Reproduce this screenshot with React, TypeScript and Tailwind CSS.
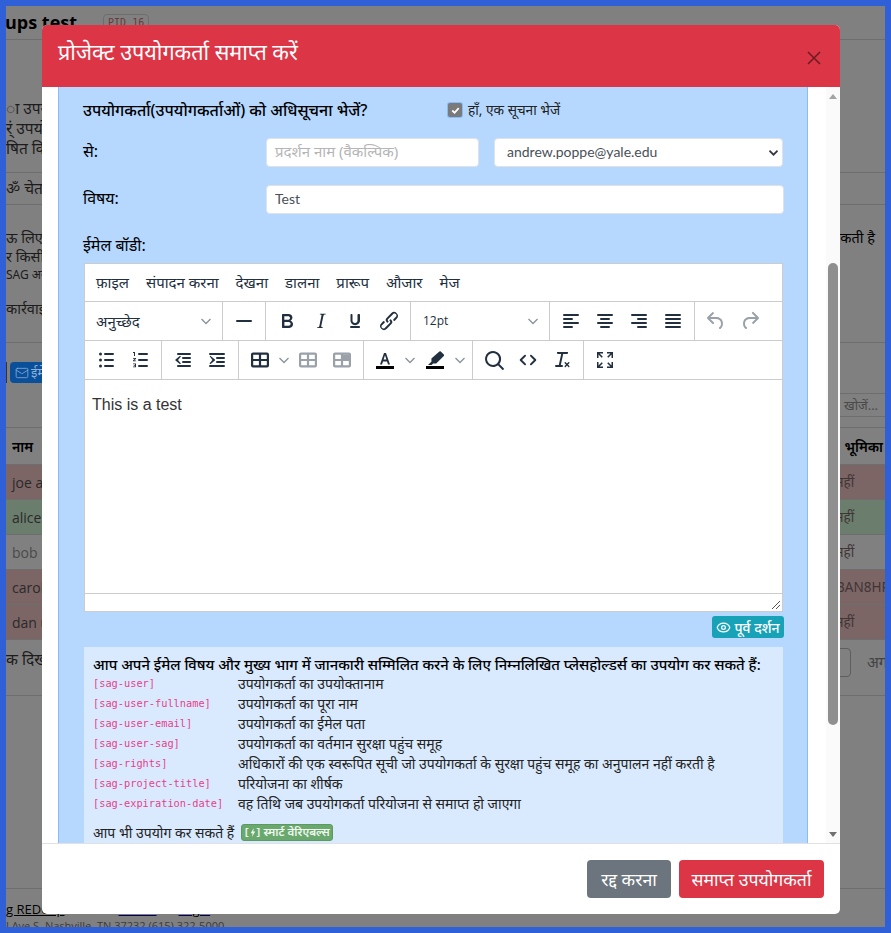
import React from 'react';
import { Eye, Mail } from 'lucide-react';

const HINDI = '"Noto Sans", "Liberation Sans", sans-serif';
const TABLE_FRAME = 'M19 4.5a2 2 0 0 1 2 2v11a2 2 0 0 1-2 2H5a2 2 0 0 1-2-2v-11c0-1.1.9-2 2-2h14zM5.2 13v4.3h5.7V13H5.2zm13.6 0h-5.700v4.300h5.700V13zm0-6.300h-5.700V11h5.700V6.700zM5.200 11h5.700V6.700H5.200V11z';

const ICONS: Record<string, React.ReactNode> = {
  hr: <rect x="4" y="11" width="16" height="2" rx="1" />,
  bold: <path d="M7.8 19c-.3 0-.5 0-.6-.2l-.2-.5V5.7c0-.2 0-.4.2-.5l.6-.2h5c1.5 0 2.7.3 3.5 1 .7.6 1.1 1.4 1.1 2.5a3 3 0 0 1-.6 1.9c-.4.6-1 1-1.6 1.2.4.1.9.3 1.3.6s.8.7 1 1.2c.4.4.5 1 .5 1.6 0 1.3-.4 2.3-1.3 3-.8.7-2.1 1-3.8 1H7.8zm5-8.3c.6 0 1.2-.1 1.6-.5.4-.3.6-.7.6-1.3 0-1.1-.8-1.7-2.3-1.700H9.3v3.5h3.4zm.5 6c.7 0 1.3-.1 1.7-.4.4-.4.6-.9.6-1.5s-.2-1-.7-1.4c-.4-.3-1-.4-2-.4H9.4v3.8h4z" />,
  italic: <path d="M16.7 4.7l-.1.9h-.3c-.6 0-1 0-1.4.3-.3.3-.4.6-.5 1.1l-2.1 9.8v.6c0 .5.4.8 1.4.8h.2l-.2.8H8l.2-.8h.2c1.1 0 1.8-.5 2-1.5l2-9.8.1-.5c0-.6-.4-.8-1.4-.8h-.3l.2-.9h5.8z" />,
  underline: <path d="M16 5c.6 0 1 .4 1 1v5.5a4 4 0 0 1-.4 1.8l-1 1.4a5.3 5.3 0 0 1-5.5 1 4 4 0 0 1-2.2-2.4c-.2-.6-.4-1.2-.4-1.8V6c0-.6.4-1 1-1s1 .4 1 1v5.5c0 .3 0 .6.2 1a3 3 0 0 0 .5.8 2.5 2.5 0 0 0 2.8.5c.3-.1.6-.3.8-.5l.5-.8.2-1V6c0-.6.4-1 1-1zM8 17h8c.6 0 1 .4 1 1s-.4 1-1 1H8a1 1 0 0 1 0-2z" />,
  link: <path d="M6.2 12.3a1 1 0 0 1 1.4 1.4l-2 2a2 2 0 1 0 2.6 2.8l4.8-4.8a1 1 0 0 0 0-1.4 1 1 0 1 1 1.4-1.3 2.9 2.9 0 0 1 0 4L9.6 20a3.9 3.9 0 0 1-5.5-5.5l2-2.2zm11.6-.6a1 1 0 0 1-1.4-1.4l2-2a2 2 0 1 0-2.6-2.8L11 10.3a1 1 0 0 0 0 1.4A1 1 0 1 1 9.6 13a2.9 2.9 0 0 1 0-4L14.4 4a3.9 3.9 0 0 1 5.5 5.5l-2 2.2z" />,
  alignLeft: <path d="M5 5h14a1 1 0 0 1 0 2H5a1 1 0 1 1 0-2zm0 4h8a1 1 0 0 1 0 2H5a1 1 0 1 1 0-2zm0 8h8a1 1 0 0 1 0 2H5a1 1 0 0 1 0-2zm0-4h14a1 1 0 0 1 0 2H5a1 1 0 0 1 0-2z" />,
  alignCenter: <path d="M5 5h14a1 1 0 0 1 0 2H5a1 1 0 1 1 0-2zm3 4h8a1 1 0 0 1 0 2H8a1 1 0 1 1 0-2zm0 8h8a1 1 0 0 1 0 2H8a1 1 0 0 1 0-2zm-3-4h14a1 1 0 0 1 0 2H5a1 1 0 0 1 0-2z" />,
  alignRight: <path d="M5 5h14a1 1 0 0 1 0 2H5a1 1 0 1 1 0-2zm6 4h8a1 1 0 0 1 0 2h-8a1 1 0 0 1 0-2zm0 8h8a1 1 0 0 1 0 2h-8a1 1 0 0 1 0-2zm-6-4h14a1 1 0 0 1 0 2H5a1 1 0 0 1 0-2z" />,
  alignJustify: <path d="M5 5h14a1 1 0 0 1 0 2H5a1 1 0 1 1 0-2zm0 4h14a1 1 0 0 1 0 2H5a1 1 0 1 1 0-2zm0 4h14a1 1 0 0 1 0 2H5a1 1 0 0 1 0-2zm0 4h14a1 1 0 0 1 0 2H5a1 1 0 0 1 0-2z" />,
  undo: <path d="M6.4 8H12c3.7 0 6.2 2 6.8 5.1.6 2.7-.4 5.6-2.3 6.8a1 1 0 0 1-1-1.8c1.1-.6 1.8-2.7 1.4-4.6-.5-2.1-2.1-3.5-4.9-3.5H6.4l3.3 3.3a1 1 0 1 1-1.4 1.4l-5-5a1 1 0 0 1 0-1.4l5-5a1 1 0 0 1 1.4 1.4L6.4 8z" />,
  redo: <path d="M17.6 10H12c-2.8 0-4.4 1.4-4.9 3.5-.4 2 .3 4 1.4 4.6a1 1 0 1 1-1 1.8c-2-1.2-2.9-4.1-2.3-6.8C5.800 10 8.300 8 12 8h5.600l-3.300-3.300a1 1 0 1 1 1.400-1.400l5 5a1 1 0 0 1 0 1.400l-5 5a1 1 0 0 1-1.400-1.400l3.300-3.300z" />,
  bullist: <path d="M11 5h8a1 1 0 0 1 0 2h-8a1 1 0 0 1 0-2zm0 6h8a1 1 0 0 1 0 2h-8a1 1 0 0 1 0-2zm0 6h8a1 1 0 0 1 0 2h-8a1 1 0 0 1 0-2zM6.500 4.500a1.500 1.500 0 1 1 0 3 1.500 1.500 0 0 1 0-3zm0 6a1.500 1.500 0 1 1 0 3 1.500 1.500 0 0 1 0-3zm0 6a1.500 1.500 0 1 1 0 3 1.500 1.500 0 0 1 0-3z" />,
  numlist: <path d="M11 5h8a1 1 0 0 1 0 2h-8a1 1 0 0 1 0-2zm0 6h8a1 1 0 0 1 0 2h-8a1 1 0 0 1 0-2zm0 6h8a1 1 0 0 1 0 2h-8a1 1 0 0 1 0-2zM6 4h1v4H6V5H5V4h1zM5 10h3v.8L6.200 12.500H8v.8H5v-.8l1.800-1.700H5V10zm0 5.500h3v3.800H5v-.8h2v-.7H5.800v-.8H7v-.7H5v-.8z" />,
  outdent: <path d="M7 5h12a1 1 0 0 1 0 2H7a1 1 0 1 1 0-2zm5 4h7a1 1 0 0 1 0 2h-7a1 1 0 0 1 0-2zm0 4h7a1 1 0 0 1 0 2h-7a1 1 0 0 1 0-2zm-5 4h12a1 1 0 0 1 0 2H7a1 1 0 0 1 0-2zm2.700-8.300L7 12l2.700 3.300a.6.6 0 0 1-.9.7L4.500 12.400a.6.6 0 0 1 0-.8L8.800 8a.6.6 0 0 1 .9.7z" />,
  indent: <path d="M5 5h14a1 1 0 0 1 0 2H5a1 1 0 1 1 0-2zm7 4h7a1 1 0 0 1 0 2h-7a1 1 0 0 1 0-2zm0 4h7a1 1 0 0 1 0 2h-7a1 1 0 0 1 0-2zm-7 4h14a1 1 0 0 1 0 2H5a1 1 0 0 1 0-2zm-.3-8.700a.6.6 0 0 1 .9-.3l4.300 3.600a.6.6 0 0 1 0 .8L5.600 16a.6.6 0 0 1-.9-.7L7.400 12 4.700 8.300z" />,
  table: <path fillRule="evenodd" d={TABLE_FRAME} />,
  tableCell: <path fillRule="evenodd" d={TABLE_FRAME} />,
  tableRow: (
    <>
      <path fillRule="evenodd" d={TABLE_FRAME} />
      <rect x="13" y="6.500" width="6" height="4.700" />
    </>
  ),
  search: <path d="M16 17.300a8 8 0 1 1 1.400-1.400l4.300 4.400a1 1 0 0 1-1.400 1.400l-4.400-4.400zM11 17a6 6 0 1 0 0-12 6 6 0 0 0 0 12z" />,
  code: <path d="M9.800 15.700a1 1 0 0 1-1.400 1.400l-4.400-4.400a1 1 0 0 1 0-1.400l4.400-4.400a1 1 0 0 1 1.400 1.400L6.100 12l3.700 3.700zm4.400 0L17.900 12l-3.700-3.700a1 1 0 0 1 1.400-1.400l4.400 4.400a1 1 0 0 1 0 1.400l-4.400 4.400a1 1 0 0 1-1.400-1.400z" />,
  clear: <path d="M13.200 6l-2.400 11H12a1 1 0 0 1 0 2H6a1 1 0 0 1 0-2h2.800l2.400-11H8a1 1 0 0 1-1-.9V4h11v1.100a1 1 0 0 1-1 .9h-3.800zM17 15.600l1.300-1.300a.7.7 0 0 1 1 1L18 16.600l1.300 1.300a.7.7 0 0 1-1 1L17 17.600l-1.300 1.300a.7.7 0 0 1-1-1l1.300-1.300-1.300-1.300a.7.7 0 0 1 1-1l1.300 1.300z" />,
  fullscreen: <path d="M4 4h6v1.500H6.600l3.200 3.200-1.100 1.100-3.200-3.200V10H4V4zm16 0v6h-1.500V6.600l-3.200 3.200-1.100-1.100 3.200-3.200H14V4h6zM4 20v-6h1.500v3.400l3.200-3.200 1.100 1.100-3.200 3.200H10V20H4zm16 0h-6v-1.500h3.400l-3.200-3.200 1.100-1.100 3.200 3.200V14H20v6z" />,
  textColor: (
    <>
      <path d="M7 16.500L11 5h2l4 11.500h-2l-1-3.100h-4l-1 3.100H7zm3.600-4.900h2.800L12 7.300l-1.400 4.300z" />
      <rect x="3" y="18" width="18" height="3" fill="#000" />
    </>
  ),
  highlight: (
    <>
      <path d="M17.800 3.500l3 3a1 1 0 0 1 0 1.400l-7.600 7.600-3-.1-1.600 1.600H5l3.500-3.500-.1-2.900 8-7.100a1 1 0 0 1 1.400 0z" />
      <rect x="3" y="18" width="18" height="3" fill="#000" />
    </>
  ),
};

function Icon({ name, muted }: { name: string; muted?: boolean }) {
  return (
    <span className="w-[34px] h-[38px] flex items-center justify-center shrink-0">
      <svg viewBox="0 0 24 24" width="24" height="24" fill={muted ? '#9aa1a9' : '#222f3e'}>
        {ICONS[name]}
      </svg>
    </span>
  );
}

function Chevron({ color = '#8a929a', size = 10, weight = 1.3 }: { color?: string; size?: number; weight?: number }) {
  return (
    <svg viewBox="0 0 10 10" width={size} height={size} fill="none" stroke={color} strokeWidth={weight}>
      <path d="M.5 3l4.500 4.500L9.500 3" />
    </svg>
  );
}

function Group({ children, last }: { children: React.ReactNode; last?: boolean }) {
  return (
    <div className={`flex items-center h-[38px] px-[4px] ${last ? '' : 'border-r border-[#cccccc]'}`}>{children}</div>
  );
}

const MENU = ['फ़ाइल', 'संपादन करना', 'देखना', 'डालना', 'प्रारूप', 'औजार', 'मेज'];

const PLACEHOLDERS = [
  ['[sag-user]', 'उपयोगकर्ता का उपयोक्तानाम'],
  ['[sag-user-fullname]', 'उपयोगकर्ता का पूरा नाम'],
  ['[sag-user-email]', 'उपयोगकर्ता का ईमेल पता'],
  ['[sag-user-sag]', 'उपयोगकर्ता का वर्तमान सुरक्षा पहुंच समूह'],
  ['[sag-rights]', 'अधिकारों की एक स्वरूपित सूची जो उपयोगकर्ता के सुरक्षा पहुंच समूह का अनुपालन नहीं करती है'],
  ['[sag-project-title]', 'परियोजना का शीर्षक'],
  ['[sag-expiration-date]', 'वह तिथि जब उपयोगकर्ता परियोजना से समाप्त हो जाएगा'],
];

// colours below are the page as seen through the modal backdrop
const ROWS = [
  { name: 'joe admin', right: 'नहीं', bg: 'bg-[#7c6565]' },
  { name: 'alice user', right: 'नहीं', bg: 'bg-[#6b7d6d]' },
  { name: 'bob user', right: 'नहीं', bg: 'bg-[#808080]', dim: true },
  { name: 'carol user', right: 'BAN8HP', bg: 'bg-[#7c6565]' },
  { name: 'dan user', right: 'नहीं', bg: 'bg-[#7c6565]' },
];

function Background() {
  return (
    <div className="bg-[#808080] h-full overflow-hidden text-[15.5px] text-[#1c1c1c] whitespace-nowrap" style={{ fontFamily: HINDI }}>
      <div className="h-[34px] border-b border-[#6e6e6e] flex items-center">
        <span className="font-bold text-[18px] -ml-[1px] text-black" style={{ fontFamily: '"Open Sans", sans-serif' }}>ups test</span>
        <span className="ml-[26px] border border-[#6e6e6e] rounded px-1 text-[10px] text-[#6a3a3a]" style={{ fontFamily: '"DejaVu Sans Mono", monospace' }}>PID 16</span>
      </div>
      <div className="h-[133px] pt-[58px] border-b border-[#6e6e6e] leading-[20px]">
        <div>ा उपयोग</div>
        <div>र्ं उपयोग</div>
        <div>षित किया</div>
      </div>
      <div className="h-[32px] border-b border-[#6e6e6e] flex items-center">
        <span>ॐ चेतावनी</span>
      </div>
      <div className="h-[138px] pt-[23px] leading-[19px] text-[14.5px] flex justify-between border-b border-[#6e6e6e]">
        <div>
          <div>ऊ लिए उप</div>
          <div>र किसी</div>
          <div className="text-[12px] leading-[17px]">SAG अनु</div>
          <div className="mt-[16px]">कार्रवाई</div>
        </div>
        <div className="text-black pr-[10px]">सकती है</div>
      </div>
      <div className="h-[84px] flex justify-between items-start">
        <div className="mt-[19px] flex items-center gap-[3px]">
          <span className="w-[1px] h-[21px] bg-[#333333]" />
          <span className="h-[21px] w-[40px] bg-[#0a4f9a] rounded text-[#8fb3d9] text-[13px] pl-[5px] flex items-center gap-[2px] overflow-hidden">
            <Mail size={14} strokeWidth={1.3} className="shrink-0" />
            ईमेल
          </span>
        </div>
        <span className="mt-[50px] h-[24px] w-[46px] border-y border-l border-[#6e6e6e] text-[13px] text-[#4a4a4a] leading-[22px] pl-[4px] overflow-hidden">खोजें...</span>
      </div>
      <div className="flex justify-between items-center h-[38px] border-y border-[#6e6e6e] px-[2px] pl-[6px] font-semibold text-black text-[14px]">
        <span>नाम</span>
        <span>भूमिका</span>
      </div>
      {ROWS.map((row) => (
        <div key={row.name} className={`flex justify-between items-center h-[35px] border-b border-[#6e6e6e] pl-[6px] text-[14px] ${row.bg} ${row.dim ? 'text-[#4a4a4a]' : 'text-[#2a2a2a]'}`}>
          <span style={{ fontFamily: '"Open Sans", sans-serif' }}>{row.name}</span>
          <span className="w-[49px] overflow-hidden text-[13.5px] text-[#403535]">{row.right}</span>
        </div>
      ))}
      <div className="h-[56px] border-b border-[#6e6e6e] flex justify-between items-start pt-[8px]">
        <span>क दिखा</span>
        <div className="flex items-center gap-[16px] text-[#444444]">
          <span className="w-[32px] h-[29px] border border-[#5e5e5e] rounded" />
          <span className="w-[18px] overflow-hidden">अगला</span>
        </div>
      </div>
      <div className="h-[193px] border-b border-[#6e6e6e]" />
      <div className="pt-[11px] text-[13px] text-black" style={{ fontFamily: '"Open Sans", sans-serif' }}>
        <div className="leading-[18px]">
          <span className="underline">g REDCap</span>
          <span className="ml-[54px] underline decoration-[#000060]">Terms</span>
          <span className="ml-[22px] underline decoration-[#000060]">Legal</span>
        </div>
        <div className="leading-[15px] text-[11px] text-[#3a3a3a]">l Ave S. Nashville, TN 37232 (615) 322-5000</div>
      </div>
    </div>
  );
}

function Editor() {
  return (
    <div className="bg-white border border-[#cccccc] w-[699px] h-[349px] flex flex-col">
      <div className="h-[38px] flex items-center border-b border-[#cccccc] pl-[11px] gap-[17px] text-[15px] text-[#222f3e] shrink-0">
        {MENU.map((m) => (
          <span key={m}>{m}</span>
        ))}
      </div>
      <div className="h-[39px] flex border-b border-[#cccccc] shrink-0">
        <div className="w-[138px] h-[38px] border-r border-[#cccccc] flex items-center justify-between pl-[11px] pr-[11px] text-[15px] text-[#222f3e]">
          <span>अनुच्छेद</span>
          <Chevron />
        </div>
        <Group><Icon name="hr" /></Group>
        <Group>
          <Icon name="bold" />
          <Icon name="italic" />
          <Icon name="underline" />
          <Icon name="link" />
        </Group>
        <div className="w-[139px] h-[38px] border-r border-[#cccccc] flex items-center justify-between pl-[12px] pr-[11px] text-[12px] text-[#222f3e]" style={{ fontFamily: '"Open Sans", sans-serif' }}>
          <span>12pt</span>
          <Chevron />
        </div>
        <Group>
          <Icon name="alignLeft" />
          <Icon name="alignCenter" />
          <Icon name="alignRight" />
          <Icon name="alignJustify" />
        </Group>
        <Group last>
          <Icon name="undo" muted />
          <Icon name="redo" muted />
        </Group>
      </div>
      <div className="h-[39px] flex border-b border-[#cccccc] shrink-0">
        <Group>
          <Icon name="bullist" />
          <Icon name="numlist" />
        </Group>
        <Group>
          <Icon name="outdent" />
          <Icon name="indent" />
        </Group>
        <Group>
          <Icon name="table" />
          <span className="w-[14px] flex justify-center"><Chevron /></span>
          <Icon name="tableCell" muted />
          <Icon name="tableRow" muted />
        </Group>
        <Group>
          <Icon name="textColor" />
          <span className="w-[16px] flex justify-center"><Chevron /></span>
          <Icon name="highlight" />
          <span className="w-[16px] flex justify-center"><Chevron /></span>
        </Group>
        <Group>
          <Icon name="search" />
          <Icon name="code" />
          <Icon name="clear" />
        </Group>
        <Group last><Icon name="fullscreen" /></Group>
      </div>
      <div className="flex-1 px-[7px] pt-[16px] text-[16px] leading-[18px] text-[#333333]" style={{ fontFamily: '"Liberation Sans", sans-serif' }}>
        This is a test
      </div>
      <div className="h-[18px] border-t border-[#cccccc] flex justify-end items-end shrink-0">
        <svg viewBox="0 0 10 10" width="10" height="10" stroke="#555555" strokeWidth="1" className="mr-[1px] mb-[1px]">
          <path d="M1 9l8-8M5 9l4-4" />
        </svg>
      </div>
    </div>
  );
}

function Panel() {
  return (
    <div className="w-[750px] h-full overflow-hidden bg-[#b6d8fe] border-x border-[#86bdfb] pl-[24px] text-[16px] text-black">
      <div className="h-[26px] mt-[10px] flex items-center font-medium">
        <span className="w-[365px] whitespace-nowrap">उपयोगकर्ता(उपयोगकर्ताओं) को अधिसूचना भेजें?</span>
        <span className="w-[14px] h-[14px] bg-[#7a7a7a] rounded-[2px] ring-1 ring-[#86bdfb] flex items-center justify-center">
          <svg viewBox="0 0 12 12" width="11" height="11" fill="none" stroke="#fff" strokeWidth="2"><path d="M2.5 6l2.5 2.5 4.5-5" /></svg>
        </span>
        <span className="ml-[6px] text-[#222222] font-normal text-[13.7px]">हाँ, एक सूचना भेजें</span>
      </div>
      <div className="flex items-center mt-[15px] h-[29px]">
        <span className="w-[183px] -mt-[3px]">से:</span>
        <div className="w-[213px] h-[29px] bg-white rounded border border-[#dfe3e7] px-[8px] pb-[3px] flex items-center text-[#b5b5b5] text-[15px]">प्रदर्शन नाम (वैकल्पिक)</div>
        <div className="w-[289px] h-[29px] ml-[15px] bg-white rounded border border-[#dfe3e7] pl-[12px] pr-[4px] flex items-center justify-between text-[#495057] text-[14px]" style={{ fontFamily: 'Lato, sans-serif' }}>
          <span className="-mt-[3px]">andrew.poppe@yale.edu</span>
          <Chevron color="#343a40" size={9} weight={2} />
        </div>
      </div>
      <div className="flex items-center mt-[18px] h-[29px]">
        <span className="w-[183px] -mt-[4px]">विषय:</span>
        <div className="w-[518px] h-[29px] bg-white rounded border border-[#dfe3e7] px-[8px] pb-[3px] flex items-center text-[#495057] text-[14px]" style={{ fontFamily: 'Lato, sans-serif' }}>Test</div>
      </div>
      <div className="h-[24px] mt-[19px] flex items-center">ईमेल बॉडी:</div>
      <div className="mt-[6px] ml-[1px]"><Editor /></div>
      <div className="flex justify-end w-[701px] mt-[4px]">
        <span className="h-[22px] w-[72px] bg-[#17a2b8] rounded-[3px] text-white text-[14px] font-medium flex items-center justify-center gap-[3px] whitespace-nowrap">
          <Eye size={15} />
          पूर्व दर्शन
        </span>
      </div>
      <div className="w-[699px] ml-[1px] bg-[#d9eafe] mt-[9px] pt-[8px] pl-[9px] pb-[12px]">
        <div className="h-[19px] leading-[19px] font-medium text-[14.8px] whitespace-nowrap">आप अपने ईमेल विषय और मुख्य भाग में जानकारी सम्मिलित करने के लिए निम्नलिखित प्लेसहोल्डर्स का उपयोग कर सकते हैं:</div>
        {PLACEHOLDERS.map(([key, label]) => (
          <div key={key} className="h-[20px] flex items-center text-[14px] text-[#222222] whitespace-nowrap">
            <span className="w-[145px] text-[10.3px] text-[#e83e8c]" style={{ fontFamily: '"DejaVu Sans Mono", monospace' }}>{key}</span>
            <span className="-mt-[2px]">{label}</span>
          </div>
        ))}
        <div className="flex items-center mt-[9px] h-[18px] text-[14px] text-[#222222] whitespace-nowrap">
          आप भी उपयोग कर सकते हैं
          <span className="ml-[7px] h-[17px] w-[92px] rounded-[3px] bg-[#6aa96e] border border-[#5d9a62] text-[#f0f7f0] text-[11.5px] font-semibold flex items-center justify-center gap-[3px]">
            <span className="flex items-center gap-[1px]">
              [
              <svg viewBox="0 0 8 12" width="6" height="9" fill="currentColor"><path d="M5 0L1 7h2.5L2.5 12 7 4.5H4.3L5 0z" /></svg>
              ]
            </span>
            स्मार्ट वेरिएबल्स
          </span>
        </div>
      </div>
    </div>
  );
}

function Scrollbar() {
  return (
    <div className="w-[14px] h-full bg-[#fafafa] flex flex-col items-center shrink-0">
      <div className="h-[176px] w-full flex justify-center pt-[7px]">
        <span className="w-0 h-0 border-x-[4px] border-x-transparent border-b-[5px] border-b-[#a3a3a3]" />
      </div>
      <div className="w-[10px] h-[462px] bg-[#8f8f8f] rounded-[5px]" />
      <div className="flex-1 flex items-end pb-[6px]">
        <span className="w-0 h-0 border-x-[4px] border-x-transparent border-t-[5px] border-t-[#707070]" />
      </div>
    </div>
  );
}

function Modal() {
  return (
    <div className="absolute z-20 left-[36px] top-[19px] w-[798px] h-[889px] bg-white rounded-[5px] overflow-hidden flex flex-col" style={{ fontFamily: HINDI }}>
      <div className="h-[62px] bg-[#dc3545] flex items-center justify-between pl-[16px] pr-[18px] shrink-0">
        <span className="text-white text-[21.6px] -mt-[8px]">प्रोजेक्ट उपयोगकर्ता समाप्त करें</span>
        <svg viewBox="0 0 16 16" width="16" height="16" stroke="#6e1c23" strokeWidth="1.6" className="mt-[3px]">
          <path d="M2 2l12 12M14 2L2 14" />
        </svg>
      </div>
      <div className="flex-1 min-h-0 flex justify-between pl-[16px]">
        <Panel />
        <Scrollbar />
      </div>
      <div className="h-[71px] border-t border-[#dee2e6] flex items-center justify-end gap-[8px] pr-[16px] shrink-0">
        <span className="h-[38px] w-[84px] bg-[#6c757d] rounded text-white text-[17.7px] flex items-center justify-center">रद्द करना</span>
        <span className="h-[38px] w-[145px] bg-[#dc3545] rounded text-white text-[17.7px] flex items-center justify-center">समाप्त उपयोगकर्ता</span>
      </div>
    </div>
  );
}

export default function App() {
  return (
    <div className="h-[933px] w-[891px] border-[6px] border-[#2f60d8] relative overflow-hidden">
      <Background />
      <Modal />
    </div>
  );
}
